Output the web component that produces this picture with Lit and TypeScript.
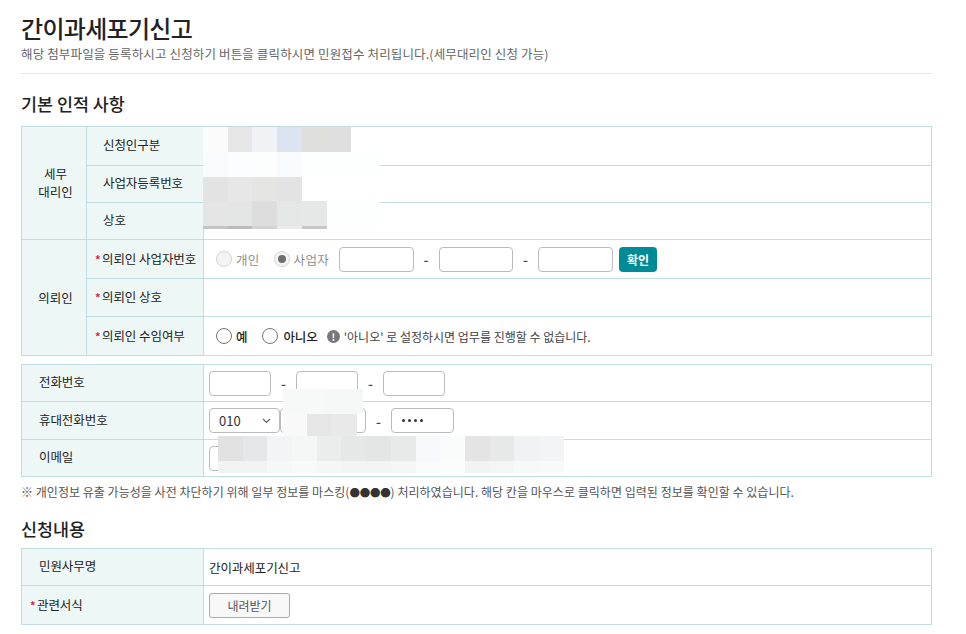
import { LitElement, html, css } from "lit";
import { customElement } from "lit/decorators.js";

type Cell = [number, number, number, number, string];

const row = (xs: number[], y: number, h: number, cols: string[]): Cell[] =>
  cols.map((c, i) => [xs[i], y, xs[i + 1] - xs[i], h, c] as Cell);

const xa = [203, 228, 252, 277, 302, 327, 351, 380];
const xb = [218, 243, 267, 292, 317, 341, 366, 391, 416, 440, 465, 490, 514, 539, 564];
const cells: Cell[] = [
  ...row(xa, 127, 25, ["#fbfbfb", "#e6e6e6", "#f1f2f5", "#dde4f1", "#dfdfde", "#dfdfdf"]),
  ...row(xa, 152, 25, ["#f8fafb", "#fcfdfe", "#fcfdfd", "#f8fbfe", "#fdfefe", "#fdfefe", "#fdfefe"]),
  ...row(xa, 177, 24, ["#e3e3e3", "#e6e7e6", "#e5e5e3", "#e3e3e3", "#ffffff", "#ffffff", "#ffffff"]),
  ...row(xa, 201, 25, ["#e5e5e5", "#e4e5e5", "#dcdddc", "#e5e6e6", "#e6e7e7", "#fdfefe", "#fdfefe"]),
  ...row(xa, 226, 3, ["#c4c4c4", "#bcbcbc", "#d2d2d2", "#ebebeb", "#c8c8c8"]),
  ...row([283, 323, 363], 389, 25, ["#f7f8f8", "#f6f7f7"]),
  ...row([283, 307, 331, 357], 414, 22, ["#f9f9f9", "#e6e6e6", "#e9e9e9"]),
  ...row(xb, 436, 25, ["#e2e2e2", "#e6e7e9", "#f3f4f5", "#f5f6f6", "#ebecec", "#e6e7e7", "#e4e5e5", "#e8e9e9", "#f8f9fa", "#fafbfb", "#e4e4e4", "#e7e8e8", "#f1f2f4", "#f3f4f5"]),
  ...row(xb, 461, 12, ["#f3f3f3", "#f3f3f3", "#f7f7f7", "#f9f9f9", "#f6f6f6", "#f3f4f4", "#f3f4f4", "#f5f5f5", "#fbfbfb", "#fcfcfc", "#f3f3f3", "#f5f5f5", "#f8f8f8", "#f9f9f9"]),
];

@customElement("app-root")
export class AppRoot extends LitElement {
  static styles = css`
    :host {
      display: block;
      position: relative;
      width: 966px;
      height: 634px;
      overflow: hidden;
      background: #fff;
      box-sizing: border-box;
      padding: 0 34px 0 21px;
      font-family: "Noto Sans CJK KR", "Noto Sans", sans-serif;
      color: #222;
      font-size: 12.5px;
      letter-spacing: -0.07px;
    }
    h1 {
      margin: 0 0 1px;
      padding-top: 11px;
      font-size: 24px;
      line-height: 34px;
      font-weight: 500;
      color: #222;
      letter-spacing: -0.7px;
    }
    .sub {
      margin: 0;
      color: #666;
      font-size: 12.5px;
      line-height: 16px;
      letter-spacing: 0.14px;
      padding-bottom: 11px;
      border-bottom: 1px solid #e6e6e6;
    }
    h2 {
      margin: 0;
      font-size: 17.4px;
      line-height: 24px;
      font-weight: 500;
      color: #222;
      letter-spacing: 0;
    }
    .h-a { padding: 18px 0 10px; }
    .h-b { padding: 0 0 7px; }
    table {
      width: 911px;
      border-collapse: collapse;
      table-layout: fixed;
      border: 1px solid #c0dde0;
    }
    td, th {
      border: 1px solid #c0dde0;
      padding: 0;
      font-weight: 400;
      vertical-align: middle;
    }
    th {
      background: #edf7f6;
      color: #222;
      font-weight: 400;
    }
    .group { text-align: center; line-height: 18px; padding-left: 3px; }
    .lab { text-align: left; padding-left: 16px; padding-bottom: 3px; }
    .req { padding-left: 8px; padding-bottom: 2px; text-align: left; white-space: nowrap; }
    .req::before {
      content: "*";
      display: inline-block;
      width: 7px;
      color: #e6194b;
      font-size: 11px;
      font-weight: 700;
    }
    .wide { padding-left: 17px; }
    td { padding-left: 5px; }
    .line { display: flex; align-items: center; }
    .r39 { height: 39px; }
    .r37 { height: 37px; }
    .r38 { height: 38px; }
    .inp {
      box-sizing: border-box;
      height: 25px;
      border: 1px solid #bbb;
      border-radius: 4px;
      background: #fff;
      display: flex;
      align-items: center;
      flex: none;
    }
    .w75 { width: 74.5px; }
    .w62 { width: 62px; }
    .w86 { width: 86px; }
    .w63 { width: 63px; }
    .dash { width: 25px; text-align: center; flex: none; color: #444; font-size: 14px; font-weight: 500; }
    .sel {
      width: 71px;
      padding-left: 9px;
      justify-content: space-between;
      padding-right: 8px;
      font-size: 13px;
      color: #333;
      letter-spacing: 0;
    }
    .sel svg { display: block; }
    .dots { padding-left: 10px; gap: 3px; }
    .dots i { width: 3px; height: 3px; border-radius: 50%; background: #333; display: block; }
    .email { width: 80px; }
    .radio {
      box-sizing: border-box;
      width: 16px;
      height: 16px;
      border-radius: 50%;
      border: 1px solid #767676;
      background: #fff;
      flex: none;
      display: flex;
      align-items: center;
      justify-content: center;
      margin-right: 4px;
    }
    .radio.off { border-color: #d4d4d4; background: #f4f4f4; }
    .radio.on::after {
      content: "";
      width: 8px;
      height: 8px;
      border-radius: 50%;
      background: #6e6e6e;
    }
    .grey { color: #8f8f8f; letter-spacing: 0.3px; }
    .biz { padding-left: 7px; }
    .ml14 { margin-left: 14px; }
    .ml15 { margin-left: 15px; margin-right: 5px; }
    .mlb { margin-left: 10px; }
    .go {
      margin-left: 6.5px;
      width: 38px;
      height: 25px;
      border: 0;
      border-radius: 4px;
      background: #008c96;
      color: #fff;
      font: inherit;
      font-size: 12px;
      font-weight: 700;
      padding: 0;
      flex: none;
    }
    .strong { font-weight: 500; color: #222; }
    .warn {
      width: 13px;
      height: 13px;
      border-radius: 50%;
      background: #777;
      color: #fff;
      font-size: 10px;
      font-weight: 700;
      line-height: 13px;
      text-align: center;
      flex: none;
      margin: 0 4px 0 9px;
    }
    .msg { color: #444; font-size: 12px; letter-spacing: 0; }
    .note {
      margin: 0;
      padding: 7px 0 17px;
      height: 16px;
      color: #555;
      line-height: 16px;
      font-size: 12px;
      letter-spacing: 0.03px;
    }
    .note span { font-size: 10.5px; color: #333; letter-spacing: -0.2px; }
    .gap { height: 8px; }
    .down {
      width: 81px;
      height: 25px;
      box-sizing: border-box;
      border: 1px solid #aaa;
      border-radius: 3px;
      background: #f8f8f8;
      color: #555;
      font: inherit;
      font-size: 12px;
      padding: 0;
    }
    .val { color: #222; }
    .blur { position: absolute; display: block; }
  `;

  render() {
    return html`
      <h1>간이과세포기신고</h1>
      <p class="sub">해당 첨부파일을 등록하시고 신청하기 버튼을 클릭하시면 민원접수 처리됩니다.(세무대리인 신청 가능)</p>
      <h2 class="h-a">기본 인적 사항</h2>
      <table>
        <colgroup><col style="width:65px" /><col style="width:117px" /><col /></colgroup>
        <tr class="r39">
          <th class="group" rowspan="3">세무<br />대리인</th>
          <th class="lab">신청인구분</th>
          <td></td>
        </tr>
        <tr class="r37"><th class="lab">사업자등록번호</th><td></td></tr>
        <tr class="r37"><th class="lab">상호</th><td></td></tr>
        <tr class="r39">
          <th class="group" rowspan="3">의뢰인</th>
          <th class="req">의뢰인 사업자번호</th>
          <td>
            <div class="line biz">
              <span class="radio off"></span><span class="grey">개인</span>
              <span class="radio off on ml14"></span><span class="grey">사업자</span>
              <span class="inp w75 mlb"></span><span class="dash">-</span>
              <span class="inp w75"></span><span class="dash">-</span>
              <span class="inp w75"></span>
              <button class="go">확인</button>
            </div>
          </td>
        </tr>
        <tr class="r38"><th class="req">의뢰인 상호</th><td></td></tr>
        <tr class="r39">
          <th class="req">의뢰인 수임여부</th>
          <td>
            <div class="line biz">
              <span class="radio"></span><span class="strong">예</span>
              <span class="radio ml15"></span><span class="strong">아니오</span>
              <span class="warn">!</span>
              <span class="msg">'아니오' 로 설정하시면 업무를 진행할 수 없습니다.</span>
            </div>
          </td>
        </tr>
      </table>
      <div class="gap"></div>
      <table>
        <colgroup><col style="width:182px" /><col /></colgroup>
        <tr class="r37">
          <th class="lab wide">전화번호</th>
          <td>
            <div class="line">
              <span class="inp w62"></span><span class="dash">-</span>
              <span class="inp w62"></span><span class="dash">-</span>
              <span class="inp w62"></span>
            </div>
          </td>
        </tr>
        <tr class="r38">
          <th class="lab wide">휴대전화번호</th>
          <td>
            <div class="line">
              <span class="inp sel">010
                <svg width="9" height="6" viewBox="0 0 9 6"><path d="M1 1l3.5 3.5L8 1" fill="none" stroke="#666" stroke-width="1.2"/></svg>
              </span>
              <span class="inp w86"></span><span class="dash">-</span>
              <span class="inp w63 dots"><i></i><i></i><i></i><i></i></span>
            </div>
          </td>
        </tr>
        <tr class="r37">
          <th class="lab wide">이메일</th>
          <td><div class="line"><span class="inp email"></span></div></td>
        </tr>
      </table>
      <p class="note">※ 개인정보 유출 가능성을 사전 차단하기 위해 일부 정보를 마스킹(<span>●●●●</span>) 처리하였습니다. 해당 칸을 마우스로 클릭하면 입력된 정보를 확인할 수 있습니다.</p>
      <h2 class="h-b">신청내용</h2>
      <table>
        <colgroup><col style="width:182px" /><col /></colgroup>
        <tr class="r37">
          <th class="lab wide">민원사무명</th>
          <td class="val">간이과세포기신고</td>
        </tr>
        <tr class="r39">
          <th class="req">관련서식</th>
          <td><button class="down">내려받기</button></td>
        </tr>
      </table>
      ${cells.map(
        ([x, y, w, h, c]) =>
          html`<span class="blur" style="left:${x}px;top:${y}px;width:${w}px;height:${h}px;background:${c}"></span>`
      )}
    `;
  }
}
